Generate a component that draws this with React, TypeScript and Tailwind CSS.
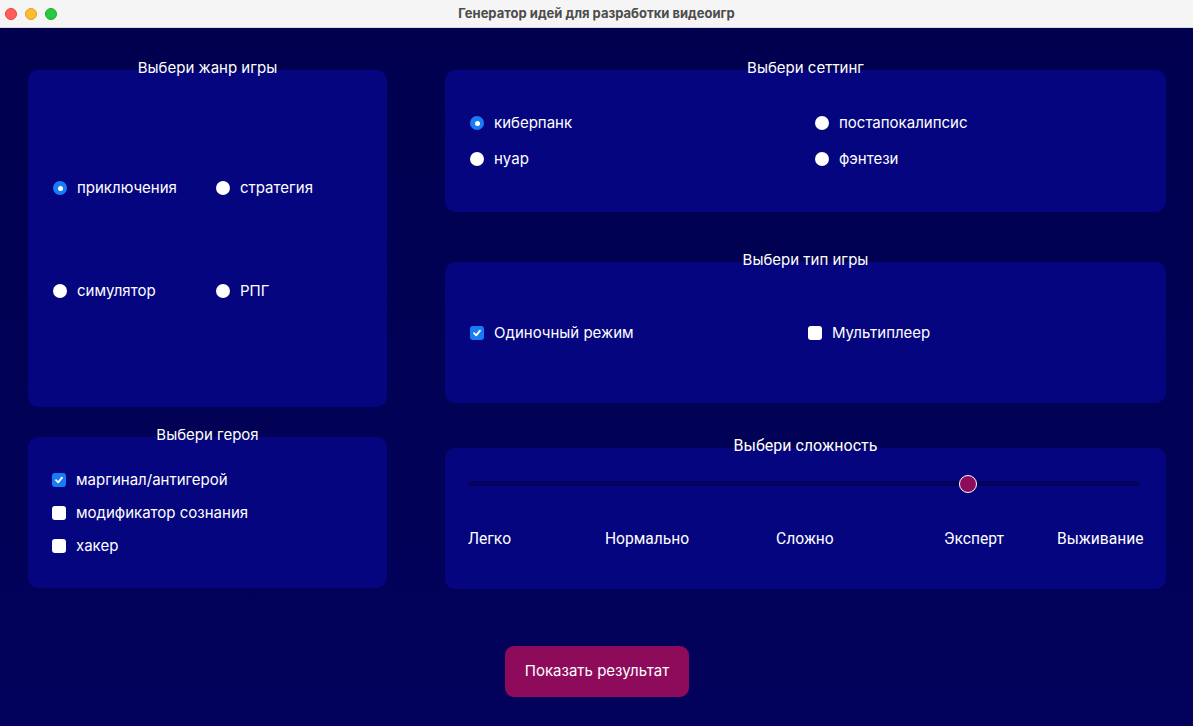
import React from "react";

const font = { fontFamily: "Inter, 'Noto Sans', sans-serif" };

function Radio({ checked, label }: { checked?: boolean; label: string }) {
  return (
    <div className="flex items-center gap-[10px]">
      {checked ? (
        <span className="w-[14px] h-[14px] rounded-full bg-[#1a7cf5] flex items-center justify-center">
          <span className="w-[5px] h-[5px] rounded-full bg-white" />
        </span>
      ) : (
        <span className="w-[14px] h-[14px] rounded-full bg-white shadow-[0_0_1px_rgba(0,0,0,0.4)]" />
      )}
      <span className="text-white text-[15px] leading-[18px]">{label}</span>
    </div>
  );
}

function Check({ checked, label }: { checked?: boolean; label: string }) {
  return (
    <div className="flex items-center gap-[10px]">
      {checked ? (
        <span className="w-[14px] h-[14px] rounded-[3px] bg-[#1a7cf5] flex items-center justify-center">
          <svg width="10" height="10" viewBox="0 0 10 10">
            <path d="M2 5.2 L4.2 7.4 L8 2.6" stroke="white" strokeWidth="1.8" fill="none" strokeLinecap="round" strokeLinejoin="round" />
          </svg>
        </span>
      ) : (
        <span className="w-[14px] h-[14px] rounded-[3px] bg-white" />
      )}
      <span className="text-white text-[15px] leading-[18px]">{label}</span>
    </div>
  );
}

function Group({
  title,
  children,
  className,
  titleClass,
}: {
  title: string;
  children: React.ReactNode;
  className?: string;
  titleClass?: string;
}) {
  return (
    <div className={"flex flex-col " + (className ?? "")}>
      <div className={"relative z-10 text-center text-white leading-[18px] -mb-[7px] " + (titleClass ?? "text-[15px]")}>
        {title}
      </div>
      <div className="flex-1 bg-[#050580] rounded-[10px]">{children}</div>
    </div>
  );
}

export default function App() {
  return (
    <div className="w-[1193px] h-[726px] flex flex-col bg-[#02025a] overflow-hidden" style={font}>
      {/* title bar */}
      <div className="h-[28px] bg-[#f6f5f5] grid grid-cols-[1fr_auto_1fr] items-center border-b border-[#dcdcdc]">
        <div className="flex items-center gap-[8px] pl-[5px]">
          <span className="w-[12px] h-[12px] rounded-full bg-[#fe5f57] border border-[#e0443e]" />
          <span className="w-[12px] h-[12px] rounded-full bg-[#febc2e] border border-[#dea123]" />
          <span className="w-[12px] h-[12px] rounded-full bg-[#28c840] border border-[#1aab29]" />
        </div>
        <div className="text-[13px] font-bold text-[#4c4c4c]">Генератор идей для разработки видеоигр</div>
        <div />
      </div>

      <div className="flex-1 flex flex-col bg-gradient-to-b from-[#00004f] to-[#02025c]">
        <div className="flex gap-[58px] pl-[28px] pr-[27px] pt-[31px]">
          {/* left column */}
          <div className="w-[359px] flex flex-col gap-[19px]">
            <Group title="Выбери жанр игры" className="h-[348px]">
              <div className="grid grid-cols-[163px_1fr] gap-y-[85px] pl-[25px] pt-[109px]">
                <Radio checked label="приключения" />
                <Radio label="стратегия" />
                <Radio label="симулятор" />
                <Radio label="РПГ" />
              </div>
            </Group>
            <Group title="Выбери героя" className="h-[162px]">
              <div className="flex flex-col gap-[15px] pl-[24px] pt-[34px]">
                <Check checked label="маргинал/антигерой" />
                <Check label="модификатор сознания" />
                <Check label="хакер" />
              </div>
            </Group>
          </div>

          {/* right column */}
          <div className="w-[721px] flex flex-col">
            <Group title="Выбери сеттинг" className="h-[153px]">
              <div className="grid grid-cols-[345px_1fr] gap-y-[18px] pl-[25px] pt-[44px]">
                <Radio checked label="киберпанк" />
                <Radio label="постапокалипсис" />
                <Radio label="нуар" />
                <Radio label="фэнтези" />
              </div>
            </Group>
            <Group title="Выбери тип игры" className="h-[152px] mt-[39px]">
              <div className="grid grid-cols-[338px_1fr] pl-[25px] pt-[62px]">
                <Check checked label="Одиночный режим" />
                <Check label="Мультиплеер" />
              </div>
            </Group>
            <Group
              title="Выбери сложность"
              className="h-[152px] mt-[34px]"
              titleClass="font-[Roboto] text-[16px]"
            >
              <div className="pl-[23px] pr-[26px] pt-[26px] font-[Roboto]">
                <div className="relative h-[18px] flex items-center">
                  <div className="w-full h-[5px] rounded-full bg-[#03035f]" />
                  <span className="absolute left-[491px] top-[1px] w-[18px] h-[18px] rounded-full bg-[#8e0a5a] border border-white" />
                </div>
                <div className="flex mt-[38px] text-white text-[15.6px] leading-[18px]">
                  <span className="w-[137px] shrink-0">Легко</span>
                  <span className="w-[171px] shrink-0">Нормально</span>
                  <span className="w-[168px] shrink-0">Сложно</span>
                  <span className="w-[113px] shrink-0">Эксперт</span>
                  <span className="whitespace-nowrap">Выживание</span>
                </div>
              </div>
            </Group>
          </div>
        </div>

        <div className="pl-[505px] pt-[57px]">
          <button className="w-[184px] h-[51px] rounded-[9px] bg-[#8e0a5a] text-white text-[15px]">
            Показать результат
          </button>
        </div>
      </div>
    </div>
  );
}
